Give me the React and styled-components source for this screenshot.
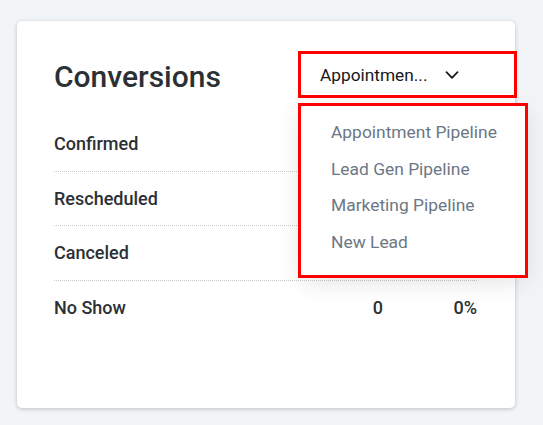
import React from "react";
import styled, { createGlobalStyle } from "styled-components";

const Global = createGlobalStyle`
  html, body { margin: 0; padding: 0; background: #f1f5f8; }
  body { font-family: Roboto, "Liberation Sans", sans-serif; }
`;

const Page = styled.div`
  padding: 21px 28px 17px 17px;
`;

const Card = styled.div`
  width: 498px;
  height: 387px;
  box-sizing: border-box;
  background: #fff;
  border-radius: 5px;
  box-shadow: 0 1px 4px rgba(0, 0, 0, 0.22);
  padding: 33px 38px 0 37px;
`;

const Header = styled.div`
  display: flex;
  align-items: center;
  justify-content: space-between;
  height: 41px;
  margin-bottom: 22px;
`;

const Title = styled.h2`
  margin: 0;
  font-size: 30px;
  font-weight: 500;
  color: #2b3034;
  line-height: 41px;
  position: relative;
  top: 2px;
`;

const DropWrap = styled.div`
  position: relative;
  margin-right: -37px;
`;

const DropButton = styled.button`
  width: 213px;
  height: 41px;
  box-sizing: border-box;
  display: flex;
  align-items: center;
  gap: 18px;
  padding: 0 0 0 19px;
  background: #fff;
  border: none;
  outline: 3px solid #ff0000;
  font-family: Roboto, "Liberation Sans", sans-serif;
  font-size: 17.3px;
  color: #15181b;
  cursor: pointer;
`;

const Menu = styled.ul`
  position: absolute;
  top: 52px;
  left: 0;
  width: 224px;
  margin: 0;
  padding: 8px 0 14px;
  list-style: none;
  background: #fff;
  outline: 3px solid #ff0000;
  box-shadow: 0 6px 24px rgba(0, 0, 0, 0.12);
  z-index: 2;
`;

const MenuItem = styled.li`
  padding: 0 0 0 30px;
  height: 36.7px;
  line-height: 36.7px;
  font-size: 17.4px;
  color: #6c7784;
  white-space: nowrap;
`;

const Row = styled.div`
  display: grid;
  grid-template-columns: 1fr auto 94px;
  align-items: center;
  height: 54.5px;
  box-sizing: border-box;
  border-bottom: ${(p) => (p.$last ? "none" : "1px dotted #c4cad0")};
  font-size: 18px;
  font-weight: 500;
  color: #2b3034;
`;

const Cell = styled.span`
  text-align: ${(p) => (p.$right ? "right" : "left")};
`;

const Chevron = () => (
  <svg width="14" height="8" viewBox="0 0 14 8" fill="none">
    <path d="M1.5 1.2l5.5 5.6 5.5-5.6" stroke="#15181b" strokeWidth="1.7" strokeLinecap="round" strokeLinejoin="round" />
  </svg>
);

const rows = [
  { label: "Confirmed" },
  { label: "Rescheduled" },
  { label: "Canceled" },
  { label: "No Show", count: "0", pct: "0%" },
];

const options = ["Appointment Pipeline", "Lead Gen Pipeline", "Marketing Pipeline", "New Lead"];

export default function App() {
  return (
    <>
      <Global />
      <Page>
        <Card>
          <Header>
            <Title>Conversions</Title>
            <DropWrap>
              <DropButton>
                <span>Appointmen...</span>
                <Chevron />
              </DropButton>
              <Menu>
                {options.map((o) => (
                  <MenuItem key={o}>{o}</MenuItem>
                ))}
              </Menu>
            </DropWrap>
          </Header>
          {rows.map((r, i) => (
            <Row key={r.label} $last={i === rows.length - 1}>
              <Cell>{r.label}</Cell>
              <Cell $right>{r.count ?? ""}</Cell>
              <Cell $right>{r.pct ?? ""}</Cell>
            </Row>
          ))}
        </Card>
      </Page>
    </>
  );
}
